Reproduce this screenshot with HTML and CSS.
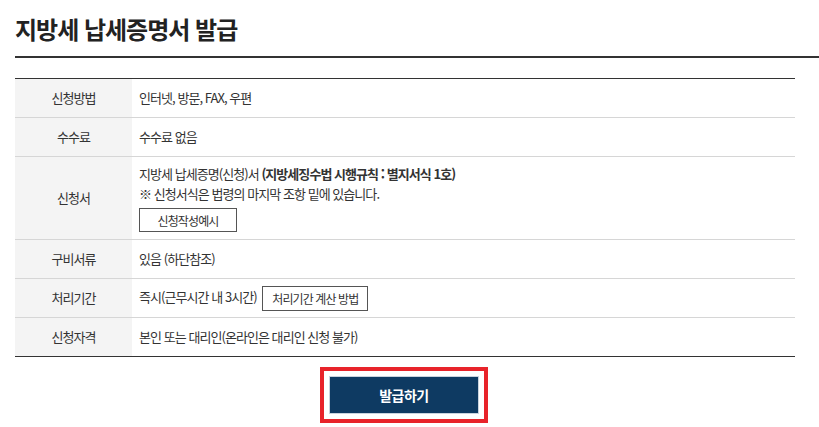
FILE: index.html
```html
<!DOCTYPE html>
<html lang="ko">
<head>
  <meta charset="UTF-8">
  <meta name="viewport" content="width=device-width, initial-scale=1.0">
  <title>지방세 납세증명서 발급</title>
  <link rel="stylesheet" href="styles.css">
</head>
<body>
  <div class="page">
    <h2 class="page-title">지방세 납세증명서 발급</h2>

    <table class="info-table">
      <tr>
        <th>신청방법</th>
        <td>인터넷, 방문, FAX, 우편</td>
      </tr>
      <tr>
        <th>수수료</th>
        <td>수수료 없음</td>
      </tr>
      <tr class="form-row">
        <th>신청서</th>
        <td>
          <p>지방세 납세증명(신청)서 <strong>(지방세징수법 시행규칙 : 별지서식 1호)</strong></p>
          <p>※ 신청서식은 법령의 마지막 조항 밑에 있습니다.</p>
          <button class="line-btn sample-btn">신청작성예시</button>
        </td>
      </tr>
      <tr>
        <th>구비서류</th>
        <td>있음 (하단참조)</td>
      </tr>
      <tr class="btn-row">
        <th>처리기간</th>
        <td>즉시(근무시간 내 3시간) <button class="line-btn">처리기간 계산 방법</button></td>
      </tr>
      <tr>
        <th>신청자격</th>
        <td>본인 또는 대리인(온라인은 대리인 신청 불가)</td>
      </tr>
    </table>

    <div class="actions">
      <div class="highlight">
        <button class="issue-btn">발급하기</button>
      </div>
    </div>
  </div>
</body>
</html>
```

FILE: styles.css
```css
body {
  margin: 0;
  font-family: "Noto Sans CJK KR", "Noto Sans", sans-serif;
  color: #333;
  background: #fff;
}
.page {
  padding-left: 15px;
}
.page-title {
  margin: 0;
  padding: 14px 0 12px;
  font-size: 24px;
  line-height: 30px;
  font-weight: 700;
  color: #222;
  letter-spacing: -1px;
  border-bottom: 2px solid #333;
}
.info-table {
  width: 780px;
  margin-top: 20px;
  border-collapse: collapse;
  border-top: 1px solid #333;
  border-bottom: 1px solid #333;
  font-size: 13px;
  letter-spacing: -0.95px;
}
.info-table th,
.info-table td {
  padding: 10px 7px;
  line-height: 18px;
  border-bottom: 1px solid #d6d6d6;
  vertical-align: middle;
}
.info-table tr:last-child th,
.info-table tr:last-child td {
  border-bottom: none;
}
.info-table th {
  width: 103px;
  background: #f4f4f4;
  font-weight: 400;
  text-align: center;
}
.info-table td {
  text-align: left;
}
.info-table p {
  margin: 0;
  line-height: 20px;
}
.info-table strong {
  font-weight: 700;
}
.form-row td {
  padding-top: 7px;
  padding-bottom: 7px;
}
.btn-row td {
  padding-top: 6px;
  padding-bottom: 6px;
}
.line-btn {
  height: 25px;
  padding: 0 9px;
  margin-left: 3px;
  border: 1px solid #555;
  background: #fff;
  color: #333;
  font-family: inherit;
  font-size: 12px;
  letter-spacing: -0.9px;
  vertical-align: middle;
  cursor: pointer;
}
.sample-btn {
  display: block;
  width: 98px;
  height: 24px;
  margin: 4px 0 0;
}
.actions {
  width: 780px;
  display: flex;
  justify-content: center;
  margin-top: 10px;
}
.highlight {
  margin-left: -2px;
  padding: 5px;
  border: 4px solid #e8232a;
}
.issue-btn {
  display: block;
  width: 150px;
  height: 38px;
  border: 1px solid #c9d3de;
  background: #0e3a62;
  color: #fff;
  font-family: inherit;
  font-size: 14px;
  font-weight: 700;
  letter-spacing: -0.5px;
  cursor: pointer;
}
```
